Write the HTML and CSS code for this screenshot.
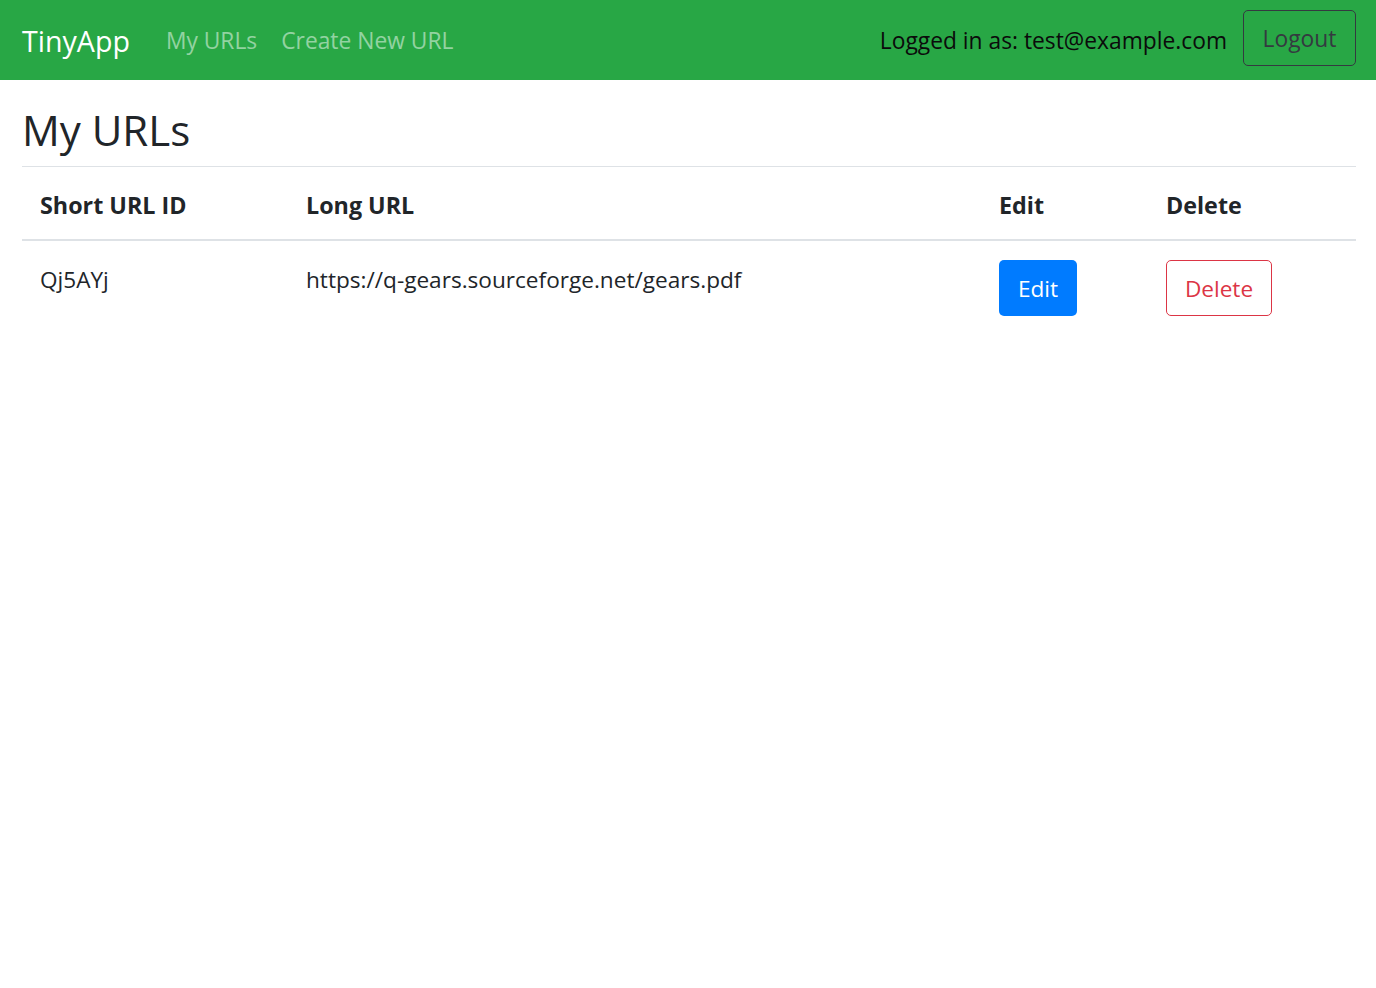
FILE: index.html
```html
<!DOCTYPE html>
<html lang="en">
<head>
<meta charset="utf-8">
<title>TinyApp</title>
<link rel="stylesheet" href="styles.css">
</head>
<body>
<nav class="navbar">
  <a class="brand" href="#">TinyApp</a>
  <div class="nav-links">
    <a class="nav-link" href="#">My URLs</a>
    <a class="nav-link" href="#">Create New URL</a>
  </div>
  <div class="nav-right">
    <span class="user">Logged in as: test@example.com</span>
    <button class="btn btn-outline-dark">Logout</button>
  </div>
</nav>
<main class="main">
  <h2 class="title">My URLs</h2>
  <table class="table">
    <thead>
      <tr>
        <th class="col-id">Short URL ID</th>
        <th class="col-long">Long URL</th>
        <th class="col-edit">Edit</th>
        <th class="col-del">Delete</th>
      </tr>
    </thead>
    <tbody>
      <tr>
        <td>Qj5AYj</td>
        <td>https://q-gears.sourceforge.net/gears.pdf</td>
        <td><button class="btn btn-primary">Edit</button></td>
        <td><button class="btn btn-outline-danger">Delete</button></td>
      </tr>
    </tbody>
  </table>
</main>
</body>
</html>
```
FILE: styles.css
```css
* { box-sizing: border-box; }
body {
  margin: 0;
  font-family: "Open Sans", "Noto Sans", sans-serif;
  font-size: 22.6px;
  color: #212529;
  background: #fff;
}
.navbar {
  height: 80px;
  background: #28a745;
  display: flex;
  align-items: center;
  padding: 0 20px 0 22px;
}
.brand {
  color: #fff;
  text-decoration: none;
  font-size: 28.6px;
  margin-right: 36px;
}
.nav-links {
  display: flex;
  gap: 24px;
}
.nav-link {
  color: rgba(255, 255, 255, 0.5);
  text-decoration: none;
  font-size: 22.8px;
}
.nav-right {
  margin-left: auto;
  display: flex;
  align-items: center;
  gap: 16px;
}
.user {
  color: #0b0b0b;
  font-size: 22.8px;
}
.btn {
  font-family: inherit;
  height: 56px;
  border-radius: 5px;
  border: 1px solid transparent;
  padding: 0;
  font-size: 22.6px;
  cursor: pointer;
  background: transparent;
}
.btn-outline-dark {
  border-color: #343a40;
  color: #343a40;
  font-size: 22.8px;
  width: 113px;
  margin-bottom: 4px;
}
.btn-primary {
  background: #007bff;
  color: #fff;
  width: 78px;
}
.btn-outline-danger {
  border-color: #dc3545;
  color: #dc3545;
  width: 106px;
}
.main {
  padding: 0 20px 0 22px;
}
.title {
  font-size: 42px;
  font-weight: 500;
  margin: 23px 0 10px;
  line-height: 53px;
}
.table {
  width: 100%;
  border-collapse: collapse;
  border-top: 1px solid #dee2e6;
}
.table th {
  text-align: left;
  font-weight: 700;
  font-size: 23.3px;
  padding: 20px 18px 16px;
  line-height: 36px;
  border-bottom: 2px solid #dee2e6;
}
.table td {
  padding: 19px 18px;
  line-height: 40px;
  vertical-align: top;
}
.col-id { width: 266px; }
.col-long { width: 693px; }
.col-edit { width: 167px; }
.col-del { width: 208px; }
```
